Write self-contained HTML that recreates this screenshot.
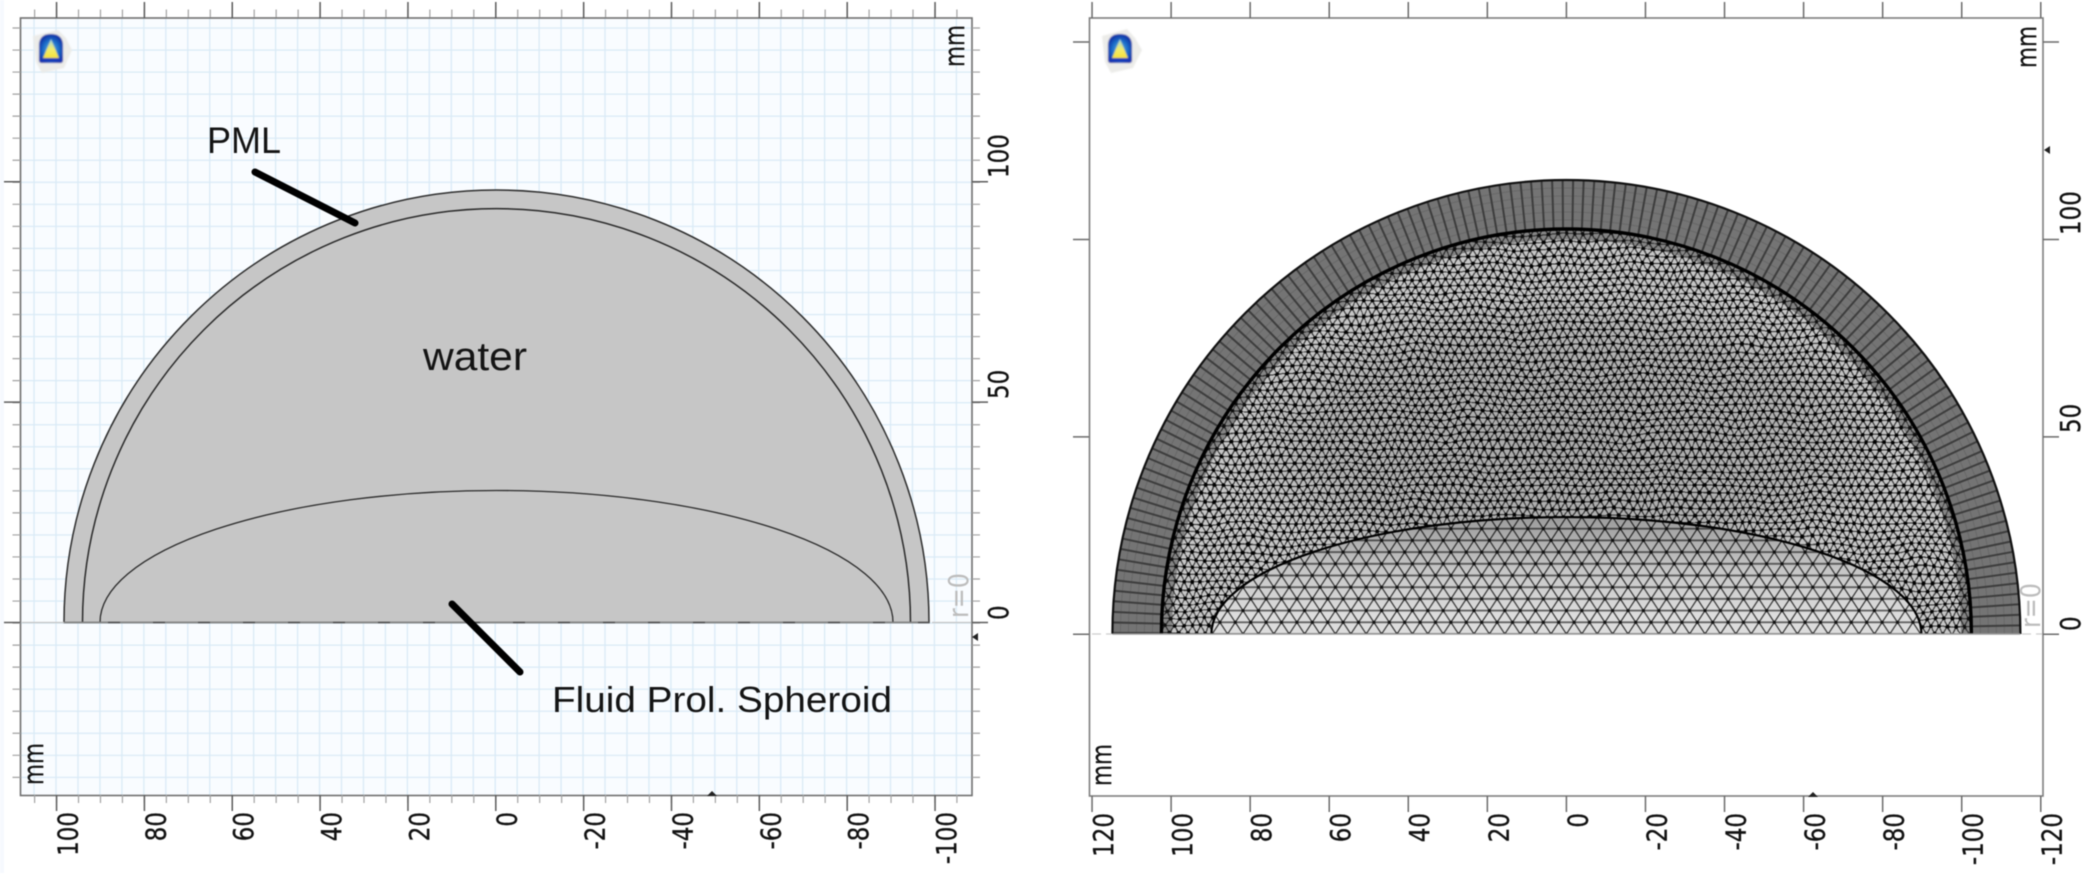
<!DOCTYPE html>
<html>
<head>
<meta charset="utf-8">
<title>Mesh comparison</title>
<style>
html,body{margin:0;padding:0;background:#fff;width:2087px;height:883px;overflow:hidden}
#w{position:relative;width:2087px;height:883px;overflow:hidden;contain:paint}
svg{display:block;position:absolute;left:0;top:0;width:2087px;height:883px;overflow:hidden;filter:blur(.65px)}
.n{font-family:"DejaVu Sans",sans-serif;font-size:23px;fill:#111;stroke:#111;stroke-width:.25px}
.r{font-family:"DejaVu Sans",sans-serif;font-size:23px;fill:#bdbdbd}
.a{font-family:"Liberation Sans",sans-serif;fill:#141414}
</style>
</head>
<body>
<div id="w">
<svg width="2087" height="883" viewBox="0 0 2087 883" xmlns="http://www.w3.org/2000/svg">
<defs>
  <pattern id="grid" patternUnits="userSpaceOnUse" x="33.4" y="27.4" width="21.96" height="22.04">
    <rect width="21.96" height="22.04" fill="#f9fcff"/>
    <path d="M.6 0V22.04M0 .6H21.96" stroke="#d9eaf6" stroke-width="1.35" fill="none"/>
  </pattern>
  <pattern id="dense" patternUnits="userSpaceOnUse" x="1566.4" y="634" width="8.6" height="14.8">
    <rect width="8.6" height="14.8" fill="#c6c6c6"/>
    <path d="M0 0H8.6M0 7.4H8.6M0 14.8H8.6M0 0L4.3 7.4L0 14.8M8.6 0L4.3 7.4L8.6 14.8" stroke="#2a2a2a" stroke-width="1.1" fill="none"/>
    <circle cx="0" cy="0" r="1.9" fill="#000"/><circle cx="8.6" cy="0" r="1.9" fill="#000"/>
    <circle cx="0" cy="14.8" r="1.9" fill="#000"/><circle cx="8.6" cy="14.8" r="1.9" fill="#000"/>
    <circle cx="4.3" cy="7.4" r="1.9" fill="#000"/>
  </pattern>
  <pattern id="coarse" patternUnits="userSpaceOnUse" x="1566.4" y="634" width="15.4" height="23.4">
    <rect width="15.4" height="23.4" fill="#dcdcdc"/>
    <path d="M0 0H15.4M0 11.7H15.4M0 23.4H15.4" stroke="#5c5c5c" stroke-width="1.7" fill="none"/>
    <path d="M0 0L7.7 11.7L0 23.4M15.4 0L7.7 11.7L15.4 23.4" stroke="#2c2c2c" stroke-width="1.15" fill="none"/>
    <circle cx="7.7" cy="11.7" r="1.6" fill="#111"/><circle cx="0" cy="0" r="1.6" fill="#111"/>
    <circle cx="15.4" cy="0" r="1.6" fill="#111"/><circle cx="0" cy="23.4" r="1.6" fill="#111"/>
    <circle cx="15.4" cy="23.4" r="1.6" fill="#111"/>
  </pattern>
  <filter id="warp" filterUnits="userSpaceOnUse" x="1100" y="170" width="930" height="480">
    <feTurbulence type="fractalNoise" baseFrequency="0.02" numOctaves="2" seed="4" result="t"/>
    <feDisplacementMap in="SourceGraphic" in2="t" scale="9" xChannelSelector="R" yChannelSelector="G"/>
  </filter>
  <filter id="soft" filterUnits="userSpaceOnUse" x="0" y="0" width="2087" height="120">
    <feGaussianBlur stdDeviation=".7"/>
  </filter>
  <radialGradient id="dark" cx="50%" cy="50%" r="50%">
    <stop offset="0" stop-color="#000" stop-opacity=".14"/>
    <stop offset=".7" stop-color="#000" stop-opacity=".1"/>
    <stop offset="1" stop-color="#000" stop-opacity="0"/>
  </radialGradient>
  <linearGradient id="fade" x1="0" y1="0" x2="0" y2="1">
    <stop offset="0" stop-color="#000" stop-opacity=".3"/>
    <stop offset=".55" stop-color="#000" stop-opacity=".1"/>
    <stop offset="1" stop-color="#000" stop-opacity="0"/>
  </linearGradient>
  <radialGradient id="ib" cx="50%" cy="55%" r="60%">
    <stop offset="0" stop-color="#5fb8e4"/><stop offset=".55" stop-color="#1c6cc8"/><stop offset="1" stop-color="#08209a"/>
  </radialGradient>
  <linearGradient id="iy" x1="0" y1="0" x2="0" y2="1">
    <stop offset="0" stop-color="#9fd6e6"/><stop offset=".55" stop-color="#f3ec6a"/><stop offset="1" stop-color="#f6e23a"/>
  </linearGradient>
  <clipPath id="innerR"><path d="M1161.4 634A405 405 0 0 1 1971.4 634Z"/></clipPath>
  <clipPath id="ellR"><path d="M1211.4 634A355 117 0 0 1 1921.4 634Z"/></clipPath>
</defs>

<rect width="2087" height="883" fill="#fff"/>
<rect x="0" y="0" width="4" height="873" fill="#f6f9fe"/>

<!-- LEFT PANEL -->
<rect x="20.5" y="18" width="951.5" height="777.5" fill="url(#grid)"/>
<path d="M64 622.5A432.5 432.5 0 0 1 929 622.5Z" fill="#c6c6c6" stroke="#2e2e2e" stroke-width="1.5"/>
<path d="M82.5 622.5A414 414 0 0 1 910.5 622.5" fill="none" stroke="#2a2a2a" stroke-width="1.5"/>
<path d="M100 622.5A396.5 132 0 0 1 893 622.5" fill="none" stroke="#2a2a2a" stroke-width="1.3"/>
<path d="M64 622.5H929" stroke="#8a8a8a" stroke-width="1.4"/>
<path d="M108 622.5H929" stroke="#555" stroke-width="1.4" stroke-dasharray="12 33"/>
<path d="M22 622.5H64M932 622.5H971" stroke="#c4c4c4" stroke-width="1.3"/>
<rect x="20.5" y="18" width="951.5" height="777.5" fill="none" stroke="#6f6f6f" stroke-width="1.6"/>

<!-- left panel ticks -->
<g fill="none">
  <path d="M34 13.5H958M34 799H958" stroke="#a2a2a2" stroke-width="8" stroke-dasharray="1.2 20.76"/>
  <path d="M55.8 10H937M55.8 803H937" stroke="#5c5c5c" stroke-width="16" stroke-dasharray="1.5 86.35"/>
  <path d="M16.5 27.4V780M976 27.4V780" stroke="#a2a2a2" stroke-width="8" stroke-dasharray="1.2 20.84"/>
  <path d="M12 181V625M980 181V625" stroke="#5c5c5c" stroke-width="16" stroke-dasharray="1.5 218.9"/>
</g>

<!-- left labels -->
<g class="n">
  <text text-anchor="end" transform="translate(77.5,812) rotate(-90) scale(1,1.19)">100</text>
  <text text-anchor="end" transform="translate(165.3,812) rotate(-90) scale(1,1.19)">80</text>
  <text text-anchor="end" transform="translate(253.2,812) rotate(-90) scale(1,1.19)">60</text>
  <text text-anchor="end" transform="translate(341,812) rotate(-90) scale(1,1.19)">40</text>
  <text text-anchor="end" transform="translate(428.9,812) rotate(-90) scale(1,1.19)">20</text>
  <text text-anchor="end" transform="translate(516.7,812) rotate(-90) scale(1,1.19)">0</text>
  <text text-anchor="end" transform="translate(604.6,812) rotate(-90) scale(1,1.19)">-20</text>
  <text text-anchor="end" transform="translate(692.4,812) rotate(-90) scale(1,1.19)">-40</text>
  <text text-anchor="end" transform="translate(780.3,812) rotate(-90) scale(1,1.19)">-60</text>
  <text text-anchor="end" transform="translate(868.1,812) rotate(-90) scale(1,1.19)">-80</text>
  <text text-anchor="end" transform="translate(956,812) rotate(-90) scale(1,1.19)">-100</text>
  <text transform="translate(1008,178) rotate(-90) scale(1,1.19)">100</text>
  <text transform="translate(1008,399) rotate(-90) scale(1,1.19)">50</text>
  <text transform="translate(1008,620) rotate(-90) scale(1,1.19)">0</text>
  <text textLength="42" lengthAdjust="spacingAndGlyphs" transform="translate(964,67) rotate(-90) scale(1,1.19)">mm</text>
  <text textLength="42" lengthAdjust="spacingAndGlyphs" transform="translate(43,785) rotate(-90) scale(1,1.19)">mm</text>
</g>
<text class="r" transform="translate(968,618) rotate(-90) scale(1,1.19)" textLength="45" lengthAdjust="spacingAndGlyphs">r=0</text>

<polygon points="972,637 978,633 978,641" fill="#222"/>
<polygon points="712,791 707,796 717,796" fill="#222"/>

<!-- annotations -->
<text class="a" x="207" y="153" font-size="37" textLength="74" lengthAdjust="spacingAndGlyphs">PML</text>
<text class="a" x="423" y="370" font-size="40" textLength="104" lengthAdjust="spacingAndGlyphs">water</text>
<text class="a" x="552" y="712" font-size="36" textLength="340" lengthAdjust="spacingAndGlyphs">Fluid Prol. Spheroid</text>
<path d="M255 172L355 223" stroke="#000" stroke-width="7" stroke-linecap="round"/>
<path d="M452 604L520 672" stroke="#000" stroke-width="7" stroke-linecap="round"/>

<!-- left icon -->
<g filter="url(#soft)">
  <polygon points="33,36 58,30 66,38 72,50 64,68 42,73 36,62" fill="#ecece9"/>
  <path d="M39 46Q39 34 51 34Q63 34 63 46V60Q63 63 60 63H42Q39 63 39 60Z" fill="url(#ib)"/>
  <polygon points="51,39 43,58 59,58" fill="url(#iy)"/>
  <rect x="40" y="58" width="22" height="3.5" fill="#1238b8"/>
</g>

<!-- RIGHT PANEL -->
<rect x="1089.5" y="18" width="953.5" height="778" fill="#fff"/>

<g fill="none">
  <path d="M1136.9 634A429.5 429.5 0 0 1 1995.9 634" stroke="#747474" stroke-width="49"/>
  <g stroke="#686868" stroke-width="1">
    <path d="M1152.4 634A414 414 0 0 1 1980.4 634"/>
    <path d="M1144.4 634A422 422 0 0 1 1988.4 634"/>
    <path d="M1136.4 634A430 430 0 0 1 1996.4 634"/>
    <path d="M1128.4 634A438 438 0 0 1 2004.4 634"/>
    <path d="M1120.4 634A446 446 0 0 1 2012.4 634"/>
  </g>
  <path d="M1136.9 634A429.5 429.5 0 0 1 1995.9 634" stroke="#3d3d3d" stroke-width="49" stroke-dasharray="2 8"/>
</g>

<g clip-path="url(#innerR)">
  <rect x="1150" y="220" width="830" height="420" fill="url(#dense)" filter="url(#warp)"/>
  <ellipse cx="1566" cy="440" rx="340" ry="150" fill="url(#dark)"/>
  <path d="M1166.4 634A400 400 0 0 1 1966.4 634" fill="none" stroke="#222" stroke-width="11" opacity=".4"/>
</g>
<g clip-path="url(#ellR)">
  <rect x="1200" y="510" width="730" height="124" fill="url(#coarse)"/>
  <rect x="1200" y="515" width="730" height="100" fill="url(#fade)"/>
</g>
<g fill="none">
  <path d="M1112.4 634A454 454 0 0 1 2020.4 634" stroke="#111" stroke-width="2.2"/>
  <path d="M1161.4 634A405 405 0 0 1 1971.4 634" stroke="#000" stroke-width="3.4"/>
  <path d="M1211.4 634A355 117 0 0 1 1921.4 634" stroke="#000" stroke-width="2.2"/>
  <path d="M1112.4 634H2020.4" stroke="#9a9a9a" stroke-width="1.5"/>
  <path d="M1092 634H1112M2022 634H2042" stroke="#cdcdcd" stroke-width="1.3" stroke-dasharray="9 5"/>
</g>

<rect x="1089.5" y="18" width="953.5" height="778" fill="none" stroke="#7d7d7d" stroke-width="1.6"/>

<!-- right panel ticks -->
<g fill="none">
  <path d="M1091.3 10H2043M1091.3 804H2043" stroke="#6b6b6b" stroke-width="16" stroke-dasharray="1.5 77.56"/>
  <path d="M1081 41.3V636M2051 41.3V636" stroke="#6b6b6b" stroke-width="16" stroke-dasharray="1.5 195.9"/>
</g>

<g class="n">
  <text text-anchor="end" transform="translate(1113,813) rotate(-90) scale(1,1.19)">120</text>
  <text text-anchor="end" transform="translate(1192,813) rotate(-90) scale(1,1.19)">100</text>
  <text text-anchor="end" transform="translate(1271.1,813) rotate(-90) scale(1,1.19)">80</text>
  <text text-anchor="end" transform="translate(1350.2,813) rotate(-90) scale(1,1.19)">60</text>
  <text text-anchor="end" transform="translate(1429.2,813) rotate(-90) scale(1,1.19)">40</text>
  <text text-anchor="end" transform="translate(1508.3,813) rotate(-90) scale(1,1.19)">20</text>
  <text text-anchor="end" transform="translate(1587.4,813) rotate(-90) scale(1,1.19)">0</text>
  <text text-anchor="end" transform="translate(1666.4,813) rotate(-90) scale(1,1.19)">-20</text>
  <text text-anchor="end" transform="translate(1745.5,813) rotate(-90) scale(1,1.19)">-40</text>
  <text text-anchor="end" transform="translate(1824.5,813) rotate(-90) scale(1,1.19)">-60</text>
  <text text-anchor="end" transform="translate(1903.6,813) rotate(-90) scale(1,1.19)">-80</text>
  <text text-anchor="end" transform="translate(1982.7,813) rotate(-90) scale(1,1.19)">-100</text>
  <text text-anchor="end" transform="translate(2061.7,813) rotate(-90) scale(1,1.19)">-120</text>
  <text transform="translate(2080,235) rotate(-90) scale(1,1.19)">100</text>
  <text transform="translate(2080,433) rotate(-90) scale(1,1.19)">50</text>
  <text transform="translate(2080,631) rotate(-90) scale(1,1.19)">0</text>
  <text textLength="42" lengthAdjust="spacingAndGlyphs" transform="translate(2036,68) rotate(-90) scale(1,1.19)">mm</text>
  <text textLength="42" lengthAdjust="spacingAndGlyphs" transform="translate(1111,786) rotate(-90) scale(1,1.19)">mm</text>
</g>
<text class="r" transform="translate(2040,628) rotate(-90) scale(1,1.19)" textLength="45" lengthAdjust="spacingAndGlyphs">r=0</text>

<polygon points="2044,150 2050,146 2050,154" fill="#222"/>
<polygon points="1813,792 1808,797 1818,797" fill="#222"/>

<!-- right icon -->
<g filter="url(#soft)">
  <polygon points="1102,36 1127,29 1135,38 1142,50 1133,68 1111,73 1105,62" fill="#ecece9"/>
  <path d="M1108 46Q1108 34 1120 34Q1132 34 1132 46V60Q1132 63 1129 63H1111Q1108 63 1108 60Z" fill="url(#ib)"/>
  <polygon points="1120,39 1112,58 1128,58" fill="url(#iy)"/>
  <rect x="1109" y="58" width="22" height="3.5" fill="#1238b8"/>
</g>
</svg>
</div>
</body>
</html>
